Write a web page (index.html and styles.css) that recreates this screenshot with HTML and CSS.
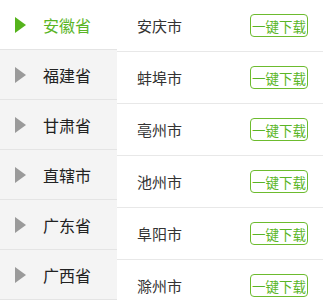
FILE: index.html
```html
<!DOCTYPE html>
<html lang="zh">
<head>
<meta charset="utf-8">
<link rel="stylesheet" href="styles.css">
</head>
<body>
<div class="page">
  <ul class="provinces">
    <li class="prov active"><span class="tri"></span><span class="pname">安徽省</span></li>
    <li class="prov"><span class="tri"></span><span class="pname">福建省</span></li>
    <li class="prov"><span class="tri"></span><span class="pname">甘肃省</span></li>
    <li class="prov"><span class="tri"></span><span class="pname">直辖市</span></li>
    <li class="prov"><span class="tri"></span><span class="pname">广东省</span></li>
    <li class="prov"><span class="tri"></span><span class="pname">广西省</span></li>
  </ul>
  <ul class="cities">
    <li class="city"><span class="cname">安庆市</span><span class="btn">一键下载</span></li>
    <li class="city"><span class="cname">蚌埠市</span><span class="btn">一键下载</span></li>
    <li class="city"><span class="cname">亳州市</span><span class="btn">一键下载</span></li>
    <li class="city"><span class="cname">池州市</span><span class="btn">一键下载</span></li>
    <li class="city"><span class="cname">阜阳市</span><span class="btn">一键下载</span></li>
    <li class="city"><span class="cname">滁州市</span><span class="btn">一键下载</span></li>
  </ul>
</div>
</body>
</html>
```
FILE: styles.css
```css
html, body {
  margin: 0;
  padding: 0;
  background: #ffffff;
  font-family: "Noto Sans CJK SC", "Noto Sans", sans-serif;
}
ul {
  list-style: none;
  margin: 0;
  padding: 0;
}
.page {
  display: flex;
  width: 323px;
  height: 300px;
  overflow: hidden;
}
.provinces {
  width: 117px;
  flex: none;
  background: #f4f4f4;
}
.prov {
  height: 49px;
  border-bottom: 1px solid #e4e4e4;
  display: flex;
  align-items: center;
  background: #f4f4f4;
}
.prov.active {
  background: #ffffff;
}
.tri {
  width: 0;
  height: 0;
  margin-left: 15px;
  border-top: 8px solid transparent;
  border-bottom: 8px solid transparent;
  border-left: 11px solid #9a9a9a;
}
.prov.active .tri {
  border-left-color: #55b31c;
}
.pname {
  margin-left: 17px;
  font-size: 16px;
  color: #222222;
}
.prov.active .pname {
  color: #5ab526;
}
.cities {
  flex: 1;
}
.city {
  height: 51px;
  border-bottom: 1px solid #e8e8e8;
  display: flex;
  align-items: center;
  justify-content: space-between;
  padding: 0 15px 0 20px;
}
.cname {
  font-size: 15px;
  color: #333333;
}
.btn {
  box-sizing: border-box;
  width: 58px;
  height: 23px;
  border: 1.5px solid #6cbb2e;
  border-radius: 4px;
  color: #5ab526;
  font-size: 13.5px;
  font-weight: normal;
  display: flex;
  align-items: center;
  justify-content: center;
  letter-spacing: 0;
  white-space: nowrap;
}
```
